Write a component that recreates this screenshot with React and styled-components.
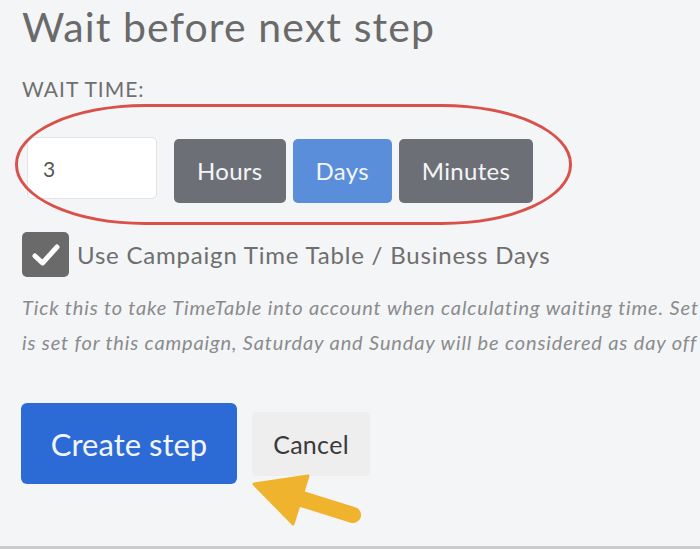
import styled, { createGlobalStyle } from 'styled-components';

const GlobalStyle = createGlobalStyle`
  html, body {
    margin: 0;
    padding: 0;
    background: #f4f5f7;
    overflow: hidden;
  }
  * {
    box-sizing: border-box;
  }
`;

const units = ['Hours', 'Days', 'Minutes'];

export default function App() {
  return (
    <>
      <GlobalStyle />
      <Page>
        <Title>Wait before next step</Title>
        <Label>WAIT TIME:</Label>
        <WaitRow>
          <Highlight />
          <NumberInput defaultValue="3" />
          <Units>
            {units.map((unit) => (
              <UnitButton key={unit} $active={unit === 'Days'}>
                {unit}
              </UnitButton>
            ))}
          </Units>
        </WaitRow>
        <CheckRow>
          <CheckBox>
            <svg width="30" height="26" viewBox="0 0 30 26">
              <path
                d="M4 14 L11.5 21 L26 5"
                fill="none"
                stroke="#fff"
                strokeWidth="5"
                strokeLinecap="round"
                strokeLinejoin="round"
              />
            </svg>
          </CheckBox>
          <CheckLabel>Use Campaign Time Table / Business Days</CheckLabel>
        </CheckRow>
        <Help>
          <HelpLine>
            Tick this to take TimeTable into account when calculating waiting time. Set the TimeTable in campaign settings. If no TimeTable
          </HelpLine>
          <HelpLine>
            is set for this campaign, Saturday and Sunday will be considered as day off (no email sent on these days).
          </HelpLine>
        </Help>
        <Actions>
          <PrimaryButton>Create step</PrimaryButton>
          <CancelButton>Cancel</CancelButton>
          <Pointer width="112" height="56" viewBox="0 0 112 56">
            <path d="M2 10 L56 2 L41 50 Z" fill="#f0b32e" strokeLinejoin="round" stroke="#f0b32e" strokeWidth="3" />
            <path d="M40 22 L101 41" stroke="#f0b32e" strokeWidth="16" strokeLinecap="round" />
          </Pointer>
        </Actions>
      </Page>
    </>
  );
}

const Page = styled.div`
  position: relative;
  width: 700px;
  height: 549px;
  padding: 0 0 0 22px;
  border-bottom: 3px solid #c9cacc;
  overflow: hidden;
  font-family: Lato, 'Open Sans', sans-serif;
  color: #6b6b6b;
`;

const Title = styled.h1`
  margin: 0;
  padding-top: 1px;
  font-size: 41px;
  font-weight: 400;
  letter-spacing: 1.1px;
  line-height: 52px;
  color: #6a6a6a;
`;

const Label = styled.div`
  margin-top: 22px;
  font-size: 21px;
  letter-spacing: 1px;
  line-height: 28px;
  color: #6f6f6f;
`;

const WaitRow = styled.div`
  position: relative;
  display: flex;
  align-items: center;
  gap: 17px;
  margin-top: 32px;
  padding-left: 5px;
  height: 66px;
`;

const Highlight = styled.div`
  position: absolute;
  left: -7px;
  top: -31px;
  width: 557px;
  height: 121px;
  border: 3px solid #d9514b;
  border-radius: 130px / 60px;
  pointer-events: none;
`;

const NumberInput = styled.input`
  width: 130px;
  height: 62px;
  padding: 0 0 0 15px;
  border: 1px solid #e3e4e6;
  border-radius: 5px;
  background: #fff;
  font-family: inherit;
  font-size: 21px;
  color: #555;
  outline: none;
`;

const Units = styled.div`
  display: flex;
  gap: 7px;
  margin-top: 5px;
`;

const UnitButton = styled.button`
  height: 64px;
  padding: 0 23px;
  border: none;
  border-radius: 5px;
  background: ${(props) => (props.$active ? '#5a8edb' : '#6c7076')};
  color: #f4f5f7;
  font-family: inherit;
  font-size: 24px;
  letter-spacing: 0.3px;
`;

const CheckRow = styled.div`
  display: flex;
  align-items: center;
  gap: 8px;
  margin-top: 31px;
`;

const CheckBox = styled.span`
  display: flex;
  align-items: center;
  justify-content: center;
  width: 47px;
  height: 45px;
  border-radius: 5px;
  background: #6a6a6a;
`;

const CheckLabel = styled.span`
  font-size: 24px;
  letter-spacing: 0.8px;
  color: #6e6e6e;
`;

const Help = styled.div`
  margin-top: 13px;
  width: 1300px;
`;

const HelpLine = styled.div`
  white-space: nowrap;
  font-size: 20px;
  font-style: italic;
  letter-spacing: 0.85px;
  line-height: 35px;
  color: #8a8b8d;
`;

const Actions = styled.div`
  position: relative;
  display: flex;
  align-items: center;
  gap: 15px;
  margin-top: 43px;
  margin-left: -1px;
`;

const PrimaryButton = styled.button`
  width: 216px;
  height: 81px;
  border: none;
  border-radius: 6px;
  background: #2c6ad6;
  color: #f2f5fb;
  font-family: inherit;
  font-size: 31px;
`;

const CancelButton = styled.button`
  width: 118px;
  height: 64px;
  border: none;
  border-radius: 4px;
  background: #eeeeef;
  color: #3a3a3a;
  font-family: inherit;
  font-size: 25px;
  letter-spacing: 0.3px;
`;

const Pointer = styled.svg`
  position: absolute;
  left: 231px;
  top: 71px;
`;
